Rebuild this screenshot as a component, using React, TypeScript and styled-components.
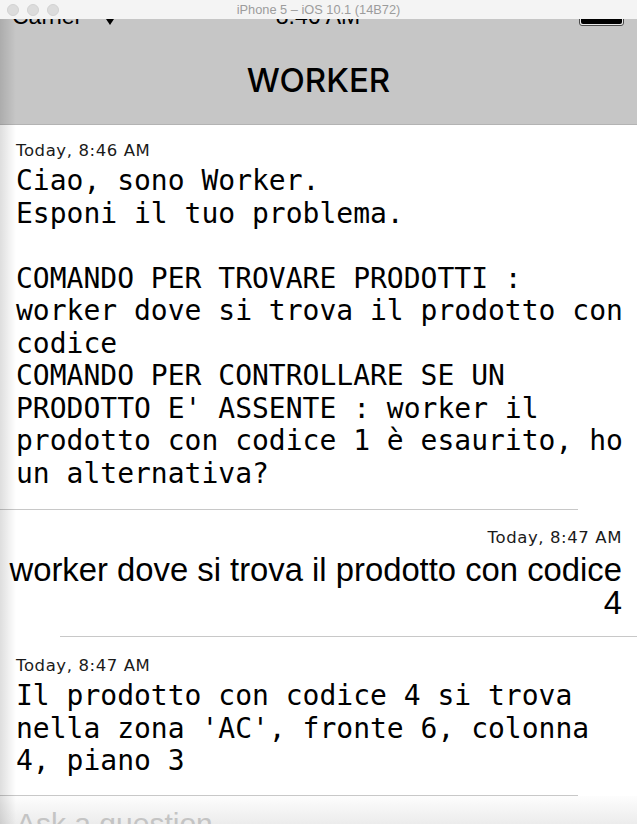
import React from "react";
import styled, { createGlobalStyle } from "styled-components";

const Global = createGlobalStyle`
  html, body { margin: 0; padding: 0; background: #fff; }
  body { width: 637px; height: 824px; overflow: hidden; }
  * { box-sizing: border-box; }
`;

const Window = styled.div`
  position: relative;
  width: 637px;
  height: 824px;
  overflow: hidden;
  display: flex;
  flex-direction: column;
  background: #fff;
`;

const TitleBar = styled.div`
  height: 19px;
  flex: none;
  background: #f4f4f4;
  display: grid;
  grid-template-columns: 1fr auto 1fr;
  align-items: center;
`;

const Lights = styled.div`
  display: flex;
  gap: 8px;
  padding-left: 7px;
`;

const Light = styled.span`
  width: 12px;
  height: 12px;
  border-radius: 50%;
  background: #dcdcdc;
  border: 1px solid #d2d2d2;
`;

const WindowTitle = styled.div`
  font-family: "Liberation Sans", Arial, sans-serif;
  font-size: 12.8px;
  color: #9c9c9c;
  line-height: 19px;
  white-space: nowrap;
`;

const NavArea = styled.div`
  flex: none;
  height: 106px;
  background: #c6c6c6;
  border-bottom: 1px solid #b3b3b3;
  display: flex;
  flex-direction: column;
`;

const StatusBar = styled.div`
  height: 9px;
  flex: none;
  overflow: hidden;
  display: flex;
  align-items: flex-end;
  padding: 0 13px 0 12px;
  font-family: "Liberation Sans", Arial, sans-serif;
  font-size: 23px;
  line-height: 23px;
  color: #000;
`;

const StatusSide = styled.span<{ $end?: boolean }>`
  flex: 1;
  display: flex;
  align-items: flex-end;
  justify-content: ${(p) => (p.$end ? "flex-end" : "flex-start")};
  white-space: nowrap;
`;

const Caret = styled.span`
  width: 0;
  height: 0;
  border-left: 4px solid transparent;
  border-right: 4px solid transparent;
  border-top: 6px solid #000;
  margin: 0 0 3px 24px;
`;

const Clock = styled.span`
  flex: none;
  white-space: nowrap;
`;

const Battery = styled.span`
  margin-bottom: 2px;
  width: 45px;
  height: 20px;
  border: 1px solid #4a4a4a;
  border-radius: 3px;
  padding: 1px;
  background: #e8e8e8;
  display: flex;
`;

const BatteryFill = styled.span`
  flex: 1;
  background: #000;
  border-radius: 2px;
`;

const NavTitle = styled.div`
  padding-top: 32px;
  text-align: center;
  font-family: Inter, "Liberation Sans", Arial, sans-serif;
  font-weight: 500;
  font-size: 33px;
  line-height: 40px;
  color: #000;
`;

const Messages = styled.div`
  flex: none;
  display: flex;
  flex-direction: column;
`;

const Entry = styled.div`
  display: flex;
  flex-direction: column;
`;

const Bubble = styled.div<{ $mine?: boolean; $first?: boolean }>`
  display: flex;
  flex-direction: column;
  align-items: ${(p) => (p.$mine ? "flex-end" : "flex-start")};
  text-align: ${(p) => (p.$mine ? "right" : "left")};
  padding: ${(p) =>
    p.$mine ? "18px 15px 17px 6px" : p.$first ? "16px 9px 19px 16px" : "19px 9px 17px 16px"};
  gap: ${(p) => (p.$mine ? "5px" : "4px")};
`;

const Stamp = styled.div`
  font-family: "DejaVu Sans", Verdana, sans-serif;
  font-size: 16.5px;
  letter-spacing: 0.6px;
  line-height: 20px;
  color: #1a1a1a;
  white-space: nowrap;
`;

const BotText = styled.div`
  align-self: stretch;
  font-family: "DejaVu Sans Mono", "Liberation Mono", monospace;
  font-size: 28px;
  line-height: 32.5px;
  color: #000;
  white-space: pre-wrap;
`;

const UserText = styled.div`
  align-self: stretch;
  font-family: "Liberation Sans", Arial, sans-serif;
  font-size: 32.8px;
  line-height: 33px;
  color: #000;
`;

const Divider = styled.div<{ $mine?: boolean }>`
  height: 1px;
  background: #c8c8c8;
  margin: ${(p) => (p.$mine ? "0 0 0 60px" : "0 59px 0 0")};
`;

const InputBar = styled.div`
  flex: 1;
  background: linear-gradient(to bottom, #fdfdfd, #ececec);
  padding: 10px 16px 0;
  overflow: hidden;
`;

const Placeholder = styled.div`
  font-family: "Liberation Sans", Arial, sans-serif;
  font-size: 30px;
  line-height: 36px;
  color: #c4c4c4;
  white-space: nowrap;
`;

const EdgeShade = styled.div`
  position: absolute;
  left: 0;
  top: 19px;
  bottom: 0;
  width: 16px;
  background: linear-gradient(to right, rgba(0, 0, 0, 0.13), rgba(0, 0, 0, 0));
  pointer-events: none;
`;

type Msg = { mine?: boolean; time: string; text: string };

const messages: Msg[] = [
  {
    time: "Today, 8:46 AM",
    text:
      "Ciao, sono Worker.\nEsponi il tuo problema.\n\nCOMANDO PER TROVARE PRODOTTI : worker dove si trova il prodotto con codice\nCOMANDO PER CONTROLLARE SE UN PRODOTTO E' ASSENTE : worker il prodotto con codice 1 è esaurito, ho un alternativa?",
  },
  {
    mine: true,
    time: "Today, 8:47 AM",
    text: "worker dove si trova il prodotto con codice 4",
  },
  {
    time: "Today, 8:47 AM",
    text: "Il prodotto con codice 4 si trova nella zona 'AC', fronte 6, colonna 4, piano 3",
  },
];

export default function App() {
  return (
    <Window>
      <Global />
      <TitleBar>
        <Lights>
          <Light />
          <Light />
          <Light />
        </Lights>
        <WindowTitle>iPhone 5 – iOS 10.1 (14B72)</WindowTitle>
        <span />
      </TitleBar>
      <NavArea>
        <StatusBar>
          <StatusSide>
            Carrier
            <Caret />
          </StatusSide>
          <Clock>8:46 AM</Clock>
          <StatusSide $end>
            <Battery>
              <BatteryFill />
            </Battery>
          </StatusSide>
        </StatusBar>
        <NavTitle>WORKER</NavTitle>
      </NavArea>
      <Messages>
        {messages.map((m, i) => (
          <Entry key={i}>
            <Bubble $mine={m.mine} $first={i === 0}>
              <Stamp>{m.time}</Stamp>
              {m.mine ? <UserText>{m.text}</UserText> : <BotText>{m.text}</BotText>}
            </Bubble>
            <Divider $mine={m.mine} />
          </Entry>
        ))}
      </Messages>
      <InputBar>
        <Placeholder>Ask a question</Placeholder>
      </InputBar>
      <EdgeShade />
    </Window>
  );
}
